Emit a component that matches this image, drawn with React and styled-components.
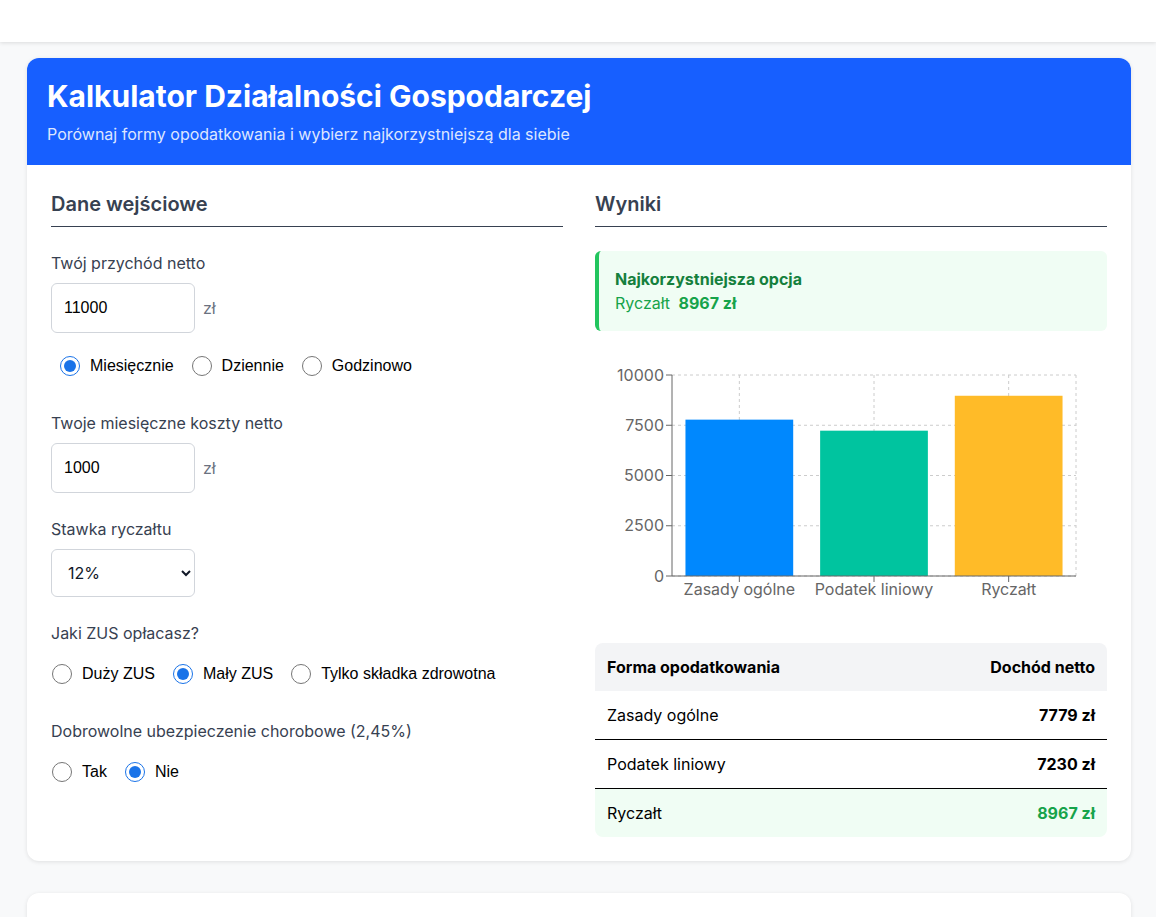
import React from "react";
import styled, { createGlobalStyle } from "styled-components";

const GlobalStyle = createGlobalStyle`
  body {
    margin: 0;
    background: #f8f9fa;
    font-family: Inter, "Noto Sans", sans-serif;
    color: #111827;
  }
`;

const TopBar = styled.div`
  height: 42px;
  background: #ffffff;
  box-shadow: 0 1px 4px rgba(0, 0, 0, 0.12);
`;

const Page = styled.div`
  max-width: 1104px;
  margin: 0 25px 0 27px;
  padding: 16px 0 0;
`;

const Card = styled.div`
  background: #ffffff;
  border-radius: 12px;
  box-shadow: 0 1px 4px rgba(0, 0, 0, 0.1);
  overflow: hidden;
  margin-bottom: 32px;
  min-height: ${(p) => (p.stub ? "60px" : "auto")};
`;

const Hero = styled.div`
  background: #175fff;
  padding: 20px 20px 19px;
  color: #ffffff;
`;

const Title = styled.h1`
  margin: 0 0 8px;
  font-size: 30px;
  line-height: 36px;
  font-weight: 700;
`;

const Subtitle = styled.p`
  margin: 0;
  font-size: 16px;
  line-height: 24px;
  color: #dde6ff;
`;

const Body = styled.div`
  display: grid;
  grid-template-columns: 1fr 1fr;
  gap: 32px;
  padding: 25px 24px 24px;
`;

const SectionTitle = styled.h2`
  margin: 0 0 24px;
  padding-bottom: 8px;
  font-size: 20px;
  line-height: 28px;
  font-weight: 600;
  color: #374151;
  border-bottom: 1px solid #374151;
`;

const Field = styled.div`
  margin-bottom: 24px;
`;

const Label = styled.div`
  font-size: 16px;
  line-height: 24px;
  color: #374151;
  margin-bottom: 8px;
`;

const InputRow = styled.div`
  display: flex;
  align-items: center;
  gap: 8px;
`;

const TextInput = styled.input`
  box-sizing: border-box;
  width: 144px;
  height: 50px;
  padding: 12px;
  border: 1px solid #d1d5db;
  border-radius: 6px;
  font-family: "Liberation Sans", Arial, sans-serif;
  font-size: 16px;
  color: #000;
`;

const Select = styled.select`
  box-sizing: border-box;
  width: 144px;
  height: 48px;
  padding: 0 8px 0 12px;
  border: 1px solid #d1d5db;
  border-radius: 6px;
  background: #fff;
  font-family: Inter, sans-serif;
  font-size: 16px;
  color: #111827;
`;

const Unit = styled.span`
  font-size: 16px;
  color: #6b7280;
`;

const RadioRow = styled.div`
  display: flex;
  align-items: center;
  gap: 18px;
  padding: 0 0 9px ${(p) => (p.indent ? "9px" : "1px")};
  margin-top: ${(p) => (p.indent ? "21px" : "17px")};
`;

const RadioOption = styled.label`
  display: flex;
  align-items: center;
  gap: 10px;
  font-family: "Liberation Sans", Arial, sans-serif;
  font-size: 16px;
  line-height: 24px;
  color: #000;
`;

const Radio = styled.input`
  width: 20px;
  height: 20px;
  margin: 0;
  accent-color: #1a73e8;
`;

const BestBox = styled.div`
  background: #f0fdf4;
  border-left: 4px solid #22c55e;
  border-radius: 6px;
  padding: 16px;
  margin-bottom: 24px;
`;

const BestTitle = styled.div`
  font-size: 16px;
  line-height: 24px;
  font-weight: 700;
  color: #15803d;
`;

const BestValue = styled.div`
  font-size: 16px;
  line-height: 24px;
  color: #16a34a;
  b {
    margin-left: 4px;
    font-weight: 700;
  }
`;

const ChartWrap = styled.div`
  height: 264px;
  margin-bottom: 24px;
`;

const Table = styled.table`
  width: 100%;
  border-collapse: collapse;
  border-radius: 8px;
  overflow: hidden;
  font-size: 16px;
`;

const Th = styled.th`
  background: #f3f4f6;
  padding: 12px;
  line-height: 24px;
  font-weight: 700;
  color: #000;
  text-align: ${(p) => (p.right ? "right" : "left")};
`;

const Tr = styled.tr`
  background: ${(p) => (p.best ? "#f0fdf4" : "#fff")};
  border-bottom: ${(p) => (p.last ? "none" : "1px solid #000")};
`;

const Td = styled.td`
  padding: 12px;
  line-height: 24px;
  color: ${(p) => (p.best && p.right ? "#16a34a" : "#000")};
  font-weight: ${(p) => (p.right ? 700 : 400)};
  text-align: ${(p) => (p.right ? "right" : "left")};
`;

const results = [
  { name: "Zasady ogólne", value: 7779, color: "#0088FE" },
  { name: "Podatek liniowy", value: 7230, color: "#00C49F" },
  { name: "Ryczałt", value: 8967, color: "#FFBB28" },
];

function BarChart() {
  const left = 77;
  const right = 481;
  const top = 20;
  const bottom = 221;
  const band = (right - left) / 3;
  const y = (v) => bottom - (v / 10000) * (bottom - top);
  const ticks = [0, 2500, 5000, 7500, 10000];
  return (
    <svg width="512" height="264" viewBox="0 0 512 264">
      <g stroke="#ccc" strokeDasharray="3 3" fill="none">
        {ticks.map((t) => (
          <line key={t} x1={left} x2={right} y1={y(t)} y2={y(t)} />
        ))}
        {results.map((r, i) => (
          <line key={r.name} x1={left + band * (i + 0.5)} x2={left + band * (i + 0.5)} y1={top} y2={bottom} />
        ))}
        <line x1={right} x2={right} y1={top} y2={bottom} />
      </g>
      {results.map((r, i) => (
        <rect
          key={r.name}
          x={left + band * i + band * 0.1}
          y={y(r.value)}
          width={band * 0.8}
          height={bottom - y(r.value)}
          fill={r.color}
        />
      ))}
      <g stroke="#666" fill="none">
        <line x1={left} x2={left} y1={top} y2={bottom} />
        <line x1={left} x2={right} y1={bottom} y2={bottom} />
        {ticks.map((t) => (
          <line key={t} x1={left - 6} x2={left} y1={y(t)} y2={y(t)} />
        ))}
        {results.map((r, i) => (
          <line key={r.name} x1={left + band * (i + 0.5)} x2={left + band * (i + 0.5)} y1={bottom} y2={bottom + 6} />
        ))}
      </g>
      <g fill="#666" fontFamily="Inter, sans-serif" fontSize="16">
        {ticks.map((t) => (
          <text key={t} x={left - 8} y={y(t)} dy="0.355em" textAnchor="end">
            {t}
          </text>
        ))}
        {results.map((r, i) => (
          <text key={r.name} x={left + band * (i + 0.5)} y={bottom + 19} textAnchor="middle">
            {r.name}
          </text>
        ))}
      </g>
    </svg>
  );
}

export default function App() {
  return (
    <>
      <GlobalStyle />
      <TopBar />
      <Page>
        <Card>
          <Hero>
            <Title>Kalkulator Działalności Gospodarczej</Title>
            <Subtitle>Porównaj formy opodatkowania i wybierz najkorzystniejszą dla siebie</Subtitle>
          </Hero>
          <Body>
            <div>
              <SectionTitle>Dane wejściowe</SectionTitle>
              <Field>
                <Label>Twój przychód netto</Label>
                <InputRow>
                  <TextInput defaultValue="11000" />
                  <Unit>zł</Unit>
                </InputRow>
                <RadioRow indent>
                  <RadioOption><Radio type="radio" name="period" defaultChecked />Miesięcznie</RadioOption>
                  <RadioOption><Radio type="radio" name="period" />Dziennie</RadioOption>
                  <RadioOption><Radio type="radio" name="period" />Godzinowo</RadioOption>
                </RadioRow>
              </Field>
              <Field>
                <Label>Twoje miesięczne koszty netto</Label>
                <InputRow>
                  <TextInput defaultValue="1000" />
                  <Unit>zł</Unit>
                </InputRow>
              </Field>
              <Field>
                <Label>Stawka ryczałtu</Label>
                <Select defaultValue="12">
                  <option value="12">12%</option>
                  <option value="8.5">8,5%</option>
                  <option value="15">15%</option>
                </Select>
              </Field>
              <Field>
                <Label>Jaki ZUS opłacasz?</Label>
                <RadioRow>
                  <RadioOption><Radio type="radio" name="zus" />Duży ZUS</RadioOption>
                  <RadioOption><Radio type="radio" name="zus" defaultChecked />Mały ZUS</RadioOption>
                  <RadioOption><Radio type="radio" name="zus" />Tylko składka zdrowotna</RadioOption>
                </RadioRow>
              </Field>
              <Field>
                <Label>Dobrowolne ubezpieczenie chorobowe (2,45%)</Label>
                <RadioRow>
                  <RadioOption><Radio type="radio" name="sick" />Tak</RadioOption>
                  <RadioOption><Radio type="radio" name="sick" defaultChecked />Nie</RadioOption>
                </RadioRow>
              </Field>
            </div>
            <div>
              <SectionTitle>Wyniki</SectionTitle>
              <BestBox>
                <BestTitle>Najkorzystniejsza opcja</BestTitle>
                <BestValue>
                  Ryczałt <b>8967 zł</b>
                </BestValue>
              </BestBox>
              <ChartWrap>
                <BarChart />
              </ChartWrap>
              <Table>
                <thead>
                  <tr>
                    <Th>Forma opodatkowania</Th>
                    <Th right>Dochód netto</Th>
                  </tr>
                </thead>
                <tbody>
                  {results.map((r, i) => {
                    const best = r.name === "Ryczałt";
                    return (
                      <Tr key={r.name} best={best} last={i === results.length - 1}>
                        <Td>{r.name}</Td>
                        <Td right best={best}>{r.value} zł</Td>
                      </Tr>
                    );
                  })}
                </tbody>
              </Table>
            </div>
          </Body>
        </Card>
        <Card stub />
      </Page>
    </>
  );
}
